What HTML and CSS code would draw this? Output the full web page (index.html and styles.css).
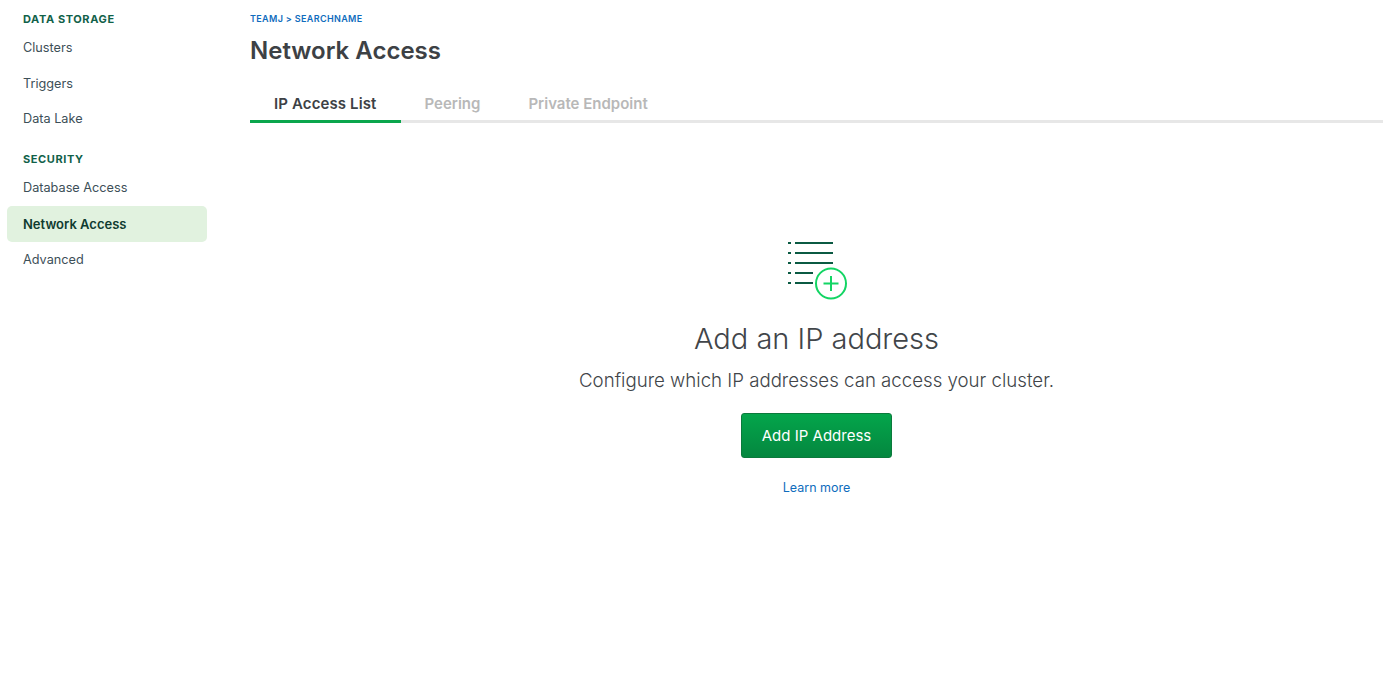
FILE: index.html
```html
<!DOCTYPE html>
<html lang="en">
<head>
<meta charset="utf-8">
<title>Network Access</title>
<link rel="stylesheet" href="styles.css">
</head>
<body>
<div class="page">
  <nav class="sidebar">
    <h4 class="nav-heading first">DATA STORAGE</h4>
    <a class="nav-item">Clusters</a>
    <a class="nav-item">Triggers</a>
    <a class="nav-item">Data Lake</a>
    <h4 class="nav-heading second">SECURITY</h4>
    <a class="nav-item">Database Access</a>
    <a class="nav-item active">Network Access</a>
    <a class="nav-item">Advanced</a>
  </nav>
  <main class="main">
    <div class="crumbs">TEAMJ &gt; SEARCHNAME</div>
    <h1 class="title">Network Access</h1>
    <div class="tabs">
      <div class="tab current">IP Access List</div>
      <div class="tab">Peering</div>
      <div class="tab">Private Endpoint</div>
    </div>
    <section class="empty">
      <svg class="empty-icon" width="62" height="62" viewBox="0 0 62 62" fill="none">
        <g stroke="#0b5a43" stroke-width="2">
          <path d="M1 4h3M8 4h38M1 14h3M8 14h38M1 24h3M8 24h38M1 34h3M8 34h18M1 44h3M8 44h18"/>
        </g>
        <circle cx="44" cy="44.500" r="15" stroke="#13d564" stroke-width="2" fill="#fff"/>
        <path d="M44 37v15M36.500 44.500h15" stroke="#13d564" stroke-width="2"/>
      </svg>
      <h2 class="empty-title">Add an IP address</h2>
      <p class="empty-text">Configure which IP addresses can access your cluster.</p>
      <button class="add-btn">Add IP Address</button>
      <a class="learn">Learn more</a>
    </section>
  </main>
</div>
</body>
</html>
```
FILE: styles.css
```css
* { box-sizing: border-box; }
html, body { margin: 0; height: 100%; background: #fff; }
body { font-family: "Inter", "Liberation Sans", sans-serif; color: #3d4f58; overflow: hidden; }
.page { display: flex; height: 692px; }
.sidebar { width: 200px; margin-left: 7px; flex: none; padding-top: 12px; }
.nav-heading { margin: 0 0 4px; padding-left: 16px; font-size: 11px; line-height: 14px; font-weight: 700; letter-spacing: .6px; color: #116149; }
.nav-heading.second { margin-top: 15.500px; }
.nav-item { display: flex; align-items: center; height: 35.500px; padding-left: 16px; font-size: 12.700px; color: #3d4f58; }
.nav-item.active { height: 36px; margin-top: .500px; background: #e1f2df; border-radius: 5px; font-size: 13px; font-weight: 600; color: #0f3b30; }
.main { margin-left: 43px; width: 1133px; flex: none; }
.crumbs { margin-top: 13px; font-size: 9px; line-height: 12px; font-weight: 600; letter-spacing: .35px; color: #0f6cbd; }
.title { margin: 11px 0 0; font-size: 24px; line-height: 30px; font-weight: 600; color: #3d4145; }
.tabs { display: flex; margin-top: 24px; height: 33px; border-bottom: 3px solid #e7e7e7; }
.tab { padding: 0 24px; height: 33px; line-height: 28px; border-bottom: 3px solid transparent; font-size: 15px; font-weight: 600; color: #b8b8b8; }
.tab.current { color: #3d4145; border-bottom-color: #0aa64d; letter-spacing: .12px; }
.empty { display: flex; flex-direction: column; align-items: center; padding-top: 116px; }
.empty-icon { display: block; margin-left: 3px; }
.empty-title { margin: 18px 0 0; font-size: 29px; line-height: 40px; font-weight: 300; color: #414549; }
.empty-text { margin: 9px 0 0; font-size: 18.670px; line-height: 26px; font-weight: 300; color: #414549; }
.add-btn { margin-top: 19px; width: 151px; height: 45px; padding: 0; border: 1px solid #0b7a3c; border-radius: 3px; background: linear-gradient(#04a54b, #04873f); color: #fff; font: 400 15px "Inter", "Liberation Sans", sans-serif; }
.learn { margin-top: 21px; font-size: 12.500px; line-height: 18px; color: #0f6cbd; }
```
